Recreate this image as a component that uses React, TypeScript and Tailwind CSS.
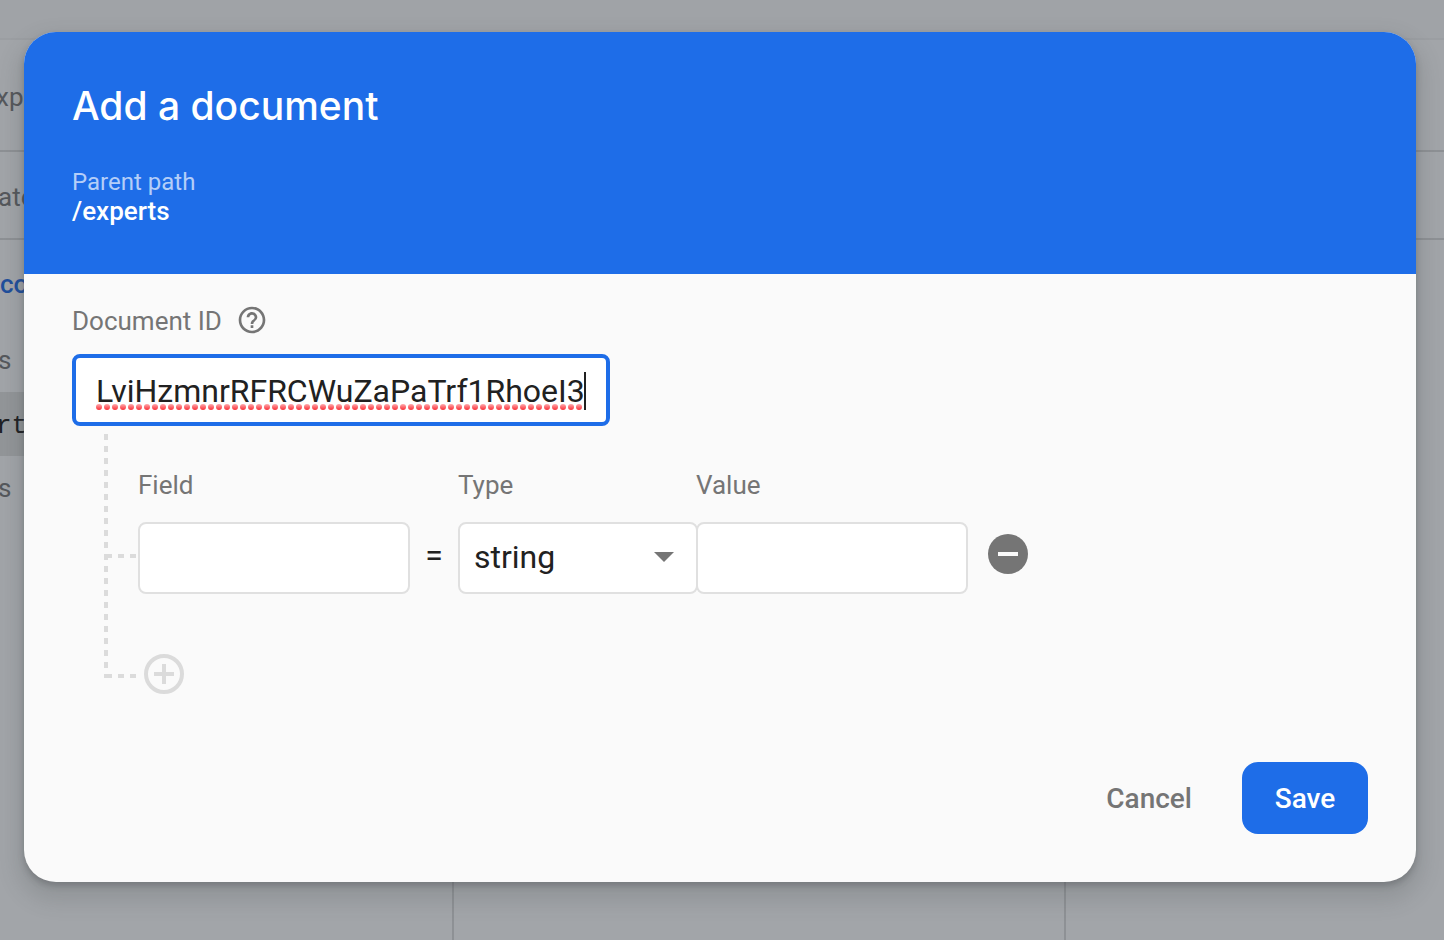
import React from "react";
import { MdHelpOutline } from "react-icons/md";

const fieldBox =
  "h-[72px] w-full rounded-lg border-2 border-[#e0e0e0] bg-white px-3.5 text-[32px] text-[#212121] outline-none";

function ConsolePage() {
  return (
    <div aria-hidden="true" className="flex min-h-screen flex-col overflow-hidden text-[26px] leading-8 text-[#55585c]">
      <div className="h-10 border-b-2 border-[#9b9ea2] bg-[#a0a3a7]" />
      <div className="flex h-28 items-center border-b-2 border-[#8e9195] pt-1">
        <span className="-ml-1">xp</span>
      </div>
      <div className="flex h-[88px] items-center border-b-2 border-[#8e9195] pt-1">
        <span className="-ml-0.5">ate</span>
      </div>
      <div className="grid flex-1 grid-cols-[454px_612px_1fr]">
        <div className="border-r-2 border-[#8e9195]">
          <div className="flex h-[88px] items-center font-medium text-[#1f4f9c]">co</div>
          <div className="flex h-16 items-center">
            <span className="-ml-0.5">s</span>
          </div>
          <div className="flex h-16 items-center bg-[#939699] pt-1 font-['Liberation_Mono',monospace] text-[#202124]">
            <span className="-ml-1">rt</span>
          </div>
          <div className="flex h-16 items-center">
            <span className="-ml-0.5">s</span>
          </div>
        </div>
        <div className="border-r-2 border-[#8e9195]" />
        <div />
      </div>
    </div>
  );
}

function SpellingMarks() {
  return (
    <svg aria-hidden="true" className="pointer-events-none absolute top-[50px] left-6 h-1.5 w-[488px]">
      <defs>
        <linearGradient id="dotFill" x1="0" y1="0" x2="0" y2="1">
          <stop offset="0" stopColor="#ffa9ac" />
          <stop offset="1" stopColor="#fa2f37" />
        </linearGradient>
        <pattern id="dots" width="8" height="6" patternUnits="userSpaceOnUse">
          <circle cx="3" cy="3" r="3" fill="url(#dotFill)" />
        </pattern>
      </defs>
      <rect width="488" height="6" fill="url(#dots)" />
    </svg>
  );
}

function TreeLines() {
  return (
    <svg
      aria-hidden="true"
      className="absolute top-2 left-8 h-[244px] w-8"
      viewBox="0 0 32 244"
      fill="none"
      stroke="#dbdbdb"
      strokeWidth="4"
      strokeDasharray="6 6"
    >
      <path d="M2 0V244" />
      <path d="M2 122H32" />
      <path d="M2 242H32" />
    </svg>
  );
}

export default function App() {
  return (
    <div className="relative bg-[#a2a5a9] font-['Roboto',sans-serif]">
      <ConsolePage />
      <div className="absolute inset-0 pt-8 pr-7 pb-14 pl-6">
        <div
          role="dialog"
          aria-labelledby="dialog-title"
          className="overflow-hidden rounded-[32px] bg-[#fafafa] shadow-[0_4px_6px_0_rgba(60,64,67,0.3),0_12px_20px_8px_rgba(60,64,67,0.15)]"
        >
          <header className="bg-[#1e6de8] p-12 text-white">
            <h1 id="dialog-title" className="font-['Inter',sans-serif] text-[39px] leading-[52px] font-medium">
              Add a document
            </h1>
            <p className="mt-9 text-2xl leading-7 text-[#b4cef8]">Parent path</p>
            <p className="text-[26px] leading-[30px] font-medium">/experts</p>
          </header>

          <form className="px-12 pt-7 pb-12" onSubmit={(e) => e.preventDefault()}>
            <div className="flex h-9 items-center gap-3.5 text-[26px] text-[#757575]">
              <label htmlFor="doc-id" className="pt-0.5">Document ID</label>
              <button type="button" aria-label="Help">
                <MdHelpOutline className="size-8" />
              </button>
            </div>

            <div className="relative mt-4 w-[538px]">
              <input
                id="doc-id"
                type="text"
                spellCheck={false}
                defaultValue="LviHzmnrRFRCWuZaPaTrf1RhoeI3"
                className="h-[72px] w-full rounded-lg border-4 border-[#1e6de8] bg-white px-5 pt-0.5 text-[32px] text-[#212121] caret-transparent outline-none"
              />
              <SpellingMarks />
              <span aria-hidden="true" className="absolute top-[18px] left-[512px] h-[38px] w-0.5 bg-[#212121]" />
            </div>

            <div className="relative pl-[66px]">
              <TreeLines />
              <div className="flex pt-11 text-[#757575]">
                <div className="w-[272px]">
                  <label htmlFor="field" className="block text-[26px] leading-[30px]">Field</label>
                  <input id="field" type="text" className={`mt-[22px] ${fieldBox}`} />
                </div>
                <span className="mt-[52px] flex h-[72px] w-12 items-center justify-center pb-1.5 text-[32px] text-[#212121]">=</span>
                <div className="w-60">
                  <label htmlFor="type" className="block text-[26px] leading-[30px]">Type</label>
                  <div className="relative mt-[22px]">
                    <select id="type" defaultValue="string" className={`appearance-none pb-0.5 ${fieldBox}`}>
                      <option>string</option>
                      <option>number</option>
                      <option>boolean</option>
                      <option>map</option>
                      <option>array</option>
                    </select>
                    <svg aria-hidden="true" viewBox="0 0 20 10" className="pointer-events-none absolute top-[30px] right-6 h-2.5 w-5">
                      <path d="M0 0H20L10 10Z" fill="#757575" />
                    </svg>
                  </div>
                </div>
                <div className="-ml-0.5 w-[272px]">
                  <label htmlFor="value" className="block text-[26px] leading-[30px]">Value</label>
                  <input id="value" type="text" className={`mt-[22px] ${fieldBox}`} />
                </div>
                <button type="button" aria-label="Remove field" className="mt-16 ml-5 size-10">
                  <svg viewBox="0 0 40 40" className="size-10">
                    <circle cx="20" cy="20" r="20" fill="#757575" />
                    <path d="M10 20H30" stroke="#fafafa" strokeWidth="4" />
                  </svg>
                </button>
              </div>
              <button type="button" aria-label="Add field" className="mt-[60px] ml-1.5 block size-10">
                <svg viewBox="0 0 40 40" className="size-10" fill="none" stroke="#dbdbdb" strokeWidth="4">
                  <circle cx="20" cy="20" r="18" />
                  <path d="M10 20H30M20 10V30" />
                </svg>
              </button>
            </div>

            <div className="mt-[68px] flex justify-end gap-[18px] text-[28px] font-medium">
              <button type="button" className="h-[72px] px-8 pt-0.5 text-[#757575]">Cancel</button>
              <button type="submit" className="h-[72px] w-[126px] rounded-2xl bg-[#1e6de8] pt-0.5 text-white">Save</button>
            </div>
          </form>
        </div>
      </div>
    </div>
  );
}
